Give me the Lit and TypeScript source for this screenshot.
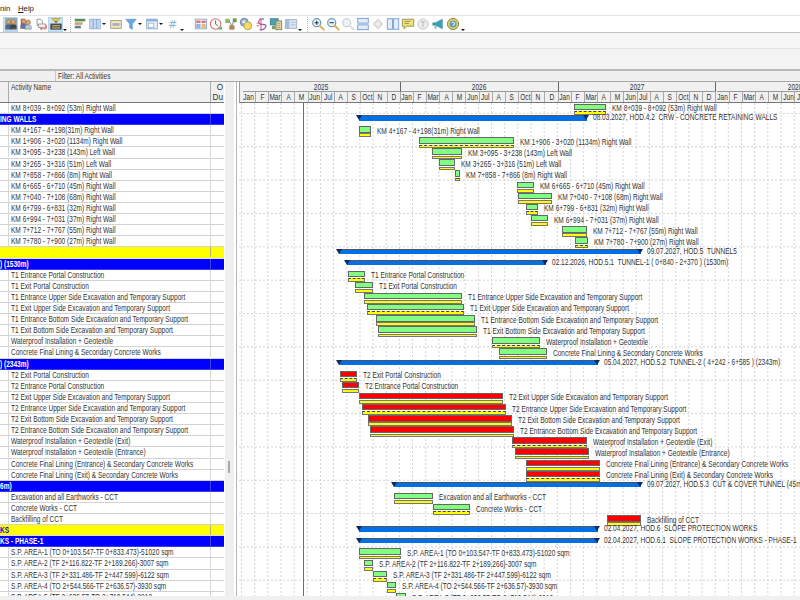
import { LitElement, html, css, svg, nothing } from "lit";
import { customElement } from "lit/decorators.js";

const ROW = 11.116;
const PANE_X = 239;
const FIRST_ROW_CENTER = 5.0;

type Row = {
  name?: string;
  kind?: "blue" | "yellow";
  bar?: [number, number];
  red?: boolean;
  sum?: [number, number];
  label?: string;
};

const rows: Row[] = [
  { name: "KM 8+039 - 8+092 (53m) Right Wall", bar: [574.3, 605.7] },
  { name: "ING WALLS", kind: "blue", sum: [357.3, 589.3], label: "08.03.2027, HOD.4.2  CRW - CONCRETE RETAINING WALLS" },
  { name: "KM 4+167 - 4+198(31m) Right Wall", bar: [359.3, 370.7] },
  { name: "KM 1+906 - 3+020 (1134m) Right Wall", bar: [419, 513.7] },
  { name: "KM 3+095 - 3+238 (143m) Left Wall", bar: [432, 462.3] },
  { name: "KM 3+265 - 3+316 (51m) Left Wall", bar: [439.3, 454.7] },
  { name: "KM 7+858 - 7+866 (8m) Right Wall", bar: [455.3, 459.7] },
  { name: "KM 6+665 - 6+710 (45m) Right Wall", bar: [517.3, 534.3] },
  { name: "KM 7+040 - 7+108 (68m) Right Wall", bar: [518, 552] },
  { name: "KM 6+799 - 6+831 (32m) Right Wall", bar: [526.3, 537.7] },
  { name: "KM 6+994 - 7+031 (37m) Right Wall", bar: [531, 547.7] },
  { name: "KM 7+712 - 7+767 (55m) Right Wall", bar: [562.3, 586.7] },
  { name: "KM 7+780 - 7+900 (27m) Right Wall", bar: [574.7, 587.7] },
  { name: "", kind: "yellow", sum: [337.3, 643], label: "09.07.2027, HOD.5  TUNNEL5" },
  { name: ") (1530m)", kind: "blue", sum: [345.3, 548.3], label: "02.12.2026, HOD.5.1  TUNNEL-1 ( 0+840 - 2+370 ) (1530m)" },
  { name: "T1 Entrance Portal Construction", bar: [347.7, 365] },
  { name: "T1 Exit Portal Construction", bar: [355.3, 372.7] },
  { name: "T1 Entrance Upper Side Excavation and Temporary Support", bar: [364.3, 461.7] },
  { name: "T1 Exit Upper Side Excavation and Temporary Support", bar: [366.7, 463.7] },
  { name: "T1 Entrance Bottom Side Excavation and Temporary Support", bar: [375.7, 474.7] },
  { name: "T1 Exit Bottom Side Excavation and Temporary Support", bar: [378.3, 476.7] },
  { name: "Waterproof Installation + Geotextile", bar: [492, 539.7] },
  { name: "Concrete Final Lining & Secondary Concrete Works", bar: [498.7, 546.7] },
  { name: ") (2343m)", kind: "blue", sum: [337.3, 600], label: "05.04.2027, HOD.5.2  TUNNEL-2 ( 4+242 - 6+585 ) (2343m)" },
  { name: "T2 Exit Portal Construction", bar: [340, 356.7], red: true },
  { name: "T2 Entrance Portal Construction", bar: [342.3, 359.3], red: true },
  { name: "T2 Exit Upper Side Excavation and Temporary Support", bar: [359.3, 503.3], red: true },
  { name: "T2 Entrance Upper Side Excavation and Temporary Support", bar: [361.7, 505.7], red: true },
  { name: "T2 Exit Bottom Side Excavation and Temporary Support", bar: [368, 512], red: true },
  { name: "T2 Entrance Bottom Side Excavation and Temporary Support", bar: [370.3, 514.3], red: true },
  { name: "Waterproof Installation + Geotextile (Exit)", bar: [512.3, 586.7], red: true },
  { name: "Waterproof Installation + Geotextile (Entrance)", bar: [515, 589], red: true },
  { name: "Concrete Final Lining (Entrance) & Secondary Concrete Works", bar: [526, 600.3], red: true },
  { name: "Concrete Final Lining (Exit) & Secondary Concrete Works", bar: [526, 600.3], red: true },
  { name: "6m)", kind: "blue", sum: [392.3, 642.7], label: "09.07.2027, HOD.5.3  CUT & COVER TUNNEL (45m)" },
  { name: "Excavation and all Earthworks - CCT", bar: [394.3, 432.7] },
  { name: "Concrete Works - CCT", bar: [433.3, 469.7] },
  { name: "Backfilling of CCT", bar: [606.7, 641], red: true },
  { name: "KS", kind: "yellow", sum: [357.3, 600], label: "02.04.2027, HOD.6  SLOPE PROTECTION WORKS" },
  { name: "KS - PHASE-1", kind: "blue", sum: [357.3, 600], label: "02.04.2027, HOD.6.1  SLOPE PROTECTION WORKS - PHASE-1" },
  { name: "S.P. AREA-1 (TO 0+103.547-TF 0+833.473)-51020 sqm", bar: [359.3, 400.7] },
  { name: "S.P. AREA-2 (TF 2+116.822-TF 2+189.266)-3007 sqm", bar: [364, 373] },
  { name: "S.P. AREA-3 (TF 2+331.486-TF 2+447.599)-6122 sqm", bar: [372.7, 387] },
  { name: "S.P. AREA-4 (TO 2+544.566-TF 2+636.57)-3930 sqm", bar: [387, 395.7] },
  { name: "S.P. AREA-5 (TF 2+636.57-TO 2+710.544)-2212", bar: [395.7, 406.3] },
];

const MONTHS = ["Jan", "F", "Mar", "A", "M", "Jun", "Jul", "A", "S", "Oct", "N", "D"];
const YEAR_W = 157.9;
const START_X = 242.8;

const ic = (body: unknown) => html`<svg class="ico" viewBox="0 0 16 16" width="16" height="16">${body}</svg>`;

const person = (x: number, y: number, shirt: string) => svg`
  <circle cx=${x} cy=${y} r="2.6" fill="#d8a878" stroke="#6b4a2a" stroke-width=".5"/>
  <path d="M${x - 3.6} ${y + 8}v-3q0-2 2-2h3.2q2 0 2 2v3z" fill=${shirt} stroke="#555" stroke-width=".4"/>`;

const mag = (sign: string, col: string, handle: string) => svg`
  <circle cx="6.5" cy="6.5" r="4.6" fill="#e8f4fb" stroke=${col} stroke-width="1.4"/>
  <path d="M10 10l4.5 4.5" stroke=${handle} stroke-width="2.2" stroke-linecap="round"/>
  ${sign === "+" ? svg`<path d="M4.2 6.5h4.6M6.5 4.2v4.6" stroke="#234" stroke-width="1.2"/>` : nothing}
  ${sign === "-" ? svg`<path d="M4.2 6.5h4.6" stroke="#234" stroke-width="1.2"/>` : nothing}`;

type Tool = { i?: unknown; on?: boolean; arrow?: "low" | "high"; sep?: number; gap?: number };

const tools: Tool[] = [
  { on: true, i: ic(svg`<rect x="2" y="1.5" width="12" height="13" fill="#a8bcae" stroke="#7a98b0"/>${person(5.5, 5.5, "#4a6a90")}${person(10.5, 5.5, "#444")}`) },
  { i: ic(svg`<rect x="2" y="2" width="5" height="11" fill="#c8606a"/>${person(5.5, 5, "#5a7ab0")}${person(10.5, 6, "#b8c6d8")}`) },
  { i: ic(svg`<path d="M3.5 2.5h4l2 2v5h-6z" fill="#fff" stroke="#888"/><rect x="5" y="8" width="8" height="4" fill="#f2f2f2" stroke="#999"/><path d="M14 9v4.5H7.5M9 12l-1.8 1.5L9 15" fill="none" stroke="#d55" stroke-width="1"/>`) },
  { on: true, arrow: "low", i: ic(svg`<path d="M3 1.5h10L10 5H6z" fill="#e8c83a" stroke="#776" stroke-width=".5"/><path d="M6.5 5h3l-1.5 2z" fill="#443"/><rect x="1.5" y="7.5" width="13" height="7" fill="#4a4a44"/><path d="M3.5 10h9M3.5 12.5h9" stroke="#e8d890"/>`) },
  { sep: 3 },
  { i: ic(svg`<rect x="2" y="2" width="12" height="3" fill="#5a8a60"/><rect x="2" y="6" width="9" height="3" fill="#c8a868"/><rect x="2" y="10" width="7" height="3" fill="#6a7a90"/>`) },
  { arrow: "high", i: ic(svg`<rect x="2" y="2.5" width="12" height="11" fill="#c4d8ef" stroke="#8fb0d8"/><path d="M6 2.5v11M10 2.5v11" stroke="#7ea2cf"/>`) },
  { i: ic(svg`<rect x="2" y="4" width="12" height="9" fill="#f2e4b8" stroke="#a89a7a"/><rect x="4" y="7" width="8" height="3" fill="#9ab0cc"/>`) },
  { arrow: "high", i: ic(svg`<path d="M2 2.5h12l-4.5 5.5v6l-3-1.5V8z" fill="#68aae0" stroke="#4a88c0" stroke-width=".6"/>`) },
  { arrow: "high", i: ic(svg`<rect x="2" y="2.5" width="12" height="11" fill="#eaf2fa" stroke="#7fa4d0"/><rect x="2" y="2.5" width="12" height="2.5" fill="#8ab0dc"/><rect x="4" y="7" width="6" height="5" fill="#fff" stroke="#9ab8d8"/>`) },
  { arrow: "low", i: html`<span class="hash">#</span>` },
  { gap: 7 },
  { i: ic(svg`<rect x="1.5" y="2.5" width="13" height="11" fill="#fff" stroke="#8aa0c0"/><rect x="2.5" y="4" width="5" height="3" fill="#d87a7a"/><rect x="8.5" y="4" width="5" height="3" fill="#d87a7a"/><rect x="2.5" y="8" width="5" height="4.5" fill="#9ab4d8"/><rect x="8.5" y="8" width="5" height="4.5" fill="#e8b880"/>`) },
  { i: ic(svg`<circle cx="7.5" cy="8" r="6" fill="#f4fbf4" stroke="#d87070" stroke-width="1.2"/><path d="M7.5 4v4.2l2.6 1.6" fill="none" stroke="#556"/><rect x="11" y="11" width="4" height="3.5" fill="#7aba7a"/>`) },
  { i: ic(svg`<rect x="1.5" y="2" width="5" height="5" fill="#8abc6a"/><rect x="10" y="1.5" width="4.5" height="4.5" fill="#6aa058"/><rect x="6" y="9.5" width="6" height="5" fill="#b08a5c"/><path d="M6 5l3 5M11 5L9 10" stroke="#777"/>`) },
  { i: ic(svg`<circle cx="6" cy="6" r="4.5" fill="#8ab4dc" stroke="#778"/><circle cx="10" cy="10" r="4.5" fill="#f2dc70" stroke="#b09a40"/><rect x="4" y="4" width="3" height="3" fill="#e8f0f8"/>`) },
  { i: ic(svg`<path d="M11.5 2.5Q6 1.5 5.5 5t4.5 3.5 3 3.5-6.5 2.5" fill="none" stroke="#8a5ab4" stroke-width="1.4"/><path d="M8 1v14" stroke="#d8505e" stroke-width="1.1"/><path d="M3 7h3M3 10h3" stroke="#d8505e"/>`) },
  { i: ic(svg`<rect x="1.5" y="2" width="9" height="7" fill="#4aa4b8" stroke="#3a7a90"/><rect x="8" y="4.5" width="6.5" height="10" fill="#ece498" stroke="#7a7a5a"/><rect x="3.5" y="10" width="4" height="4" fill="#7a9a70"/><path d="M9.5 7h3.5M9.5 9.5h3.5M9.5 12h3.5" stroke="#889"/>`) },
  { arrow: "low", i: ic(svg`<rect x="1.5" y="3" width="13" height="10" fill="#dbe6f2" stroke="#9ab0c6"/><rect x="1.5" y="3" width="4.5" height="10" fill="#a8bcd0"/><path d="M7.5 6h5.5M7.5 9h5.5" stroke="#abc"/>`) },
  { sep: 6.8 },
  { i: ic(mag("+", "#6a9ac0", "#dcb050")) },
  { i: ic(mag("-", "#6a9ac0", "#dcb050")) },
  { i: ic(mag("", "#cfcfcf", "#dedede")) },
  { i: ic(svg`<rect x="2" y="1.5" width="12" height="5.5" fill="#e4eefa" stroke="#6a96d6"/><rect x="2" y="9" width="12" height="5.5" fill="#e4eefa" stroke="#6a96d6"/>`) },
  { i: ic(svg`<path d="M8 2.5L13.5 8 8 13.5 2.5 8z" fill="#e4e4e4" stroke="#cacaca"/><rect x="6.5" y="6.5" width="3" height="3" fill="#f4f4f4"/>`) },
  { i: ic(svg`<rect x="1.5" y="2" width="5.8" height="12" fill="#e4eefa" stroke="#6a96d6"/><rect x="8.7" y="2" width="5.8" height="12" fill="#e4eefa" stroke="#6a96d6"/>`) },
  { i: ic(svg`<path d="M1.5 2.5h13v8h-8l-3 3v-3h-2z" fill="#f2e27a" stroke="#8a8a50"/><path d="M4 5h7M4 7.5h5" stroke="#8a8a50"/>`) },
  { i: ic(svg`<circle cx="8" cy="8" r="6" fill="#ececec" stroke="#c8c8c8"/><path d="M5.5 5.5h5M8 5.5v6" stroke="#bbb" stroke-width="1.2"/>`) },
  { i: ic(svg`<path d="M2 6.5h3L13 2.5v11L5 9.5H2z" fill="#3f9db0" stroke="#2f7f90" stroke-width=".5"/><rect x="4" y="10" width="2.5" height="3.5" fill="#9ac0ca"/>`) },
  { arrow: "low", i: ic(svg`<circle cx="8" cy="8" r="6.4" fill="#e8d448" stroke="#7a7a50"/><circle cx="8" cy="8" r="4" fill="#5a9ccf"/><path d="M6.4 6.6q1.6-1.8 3.2 0T8 9.4v1" fill="none" stroke="#fff" stroke-width="1.1"/>`) },
];

@customElement("app-root")
export class AppRoot extends LitElement {
  static styles = css`
    :host {
      display: block;
      width: 800px;
      height: 600px;
      overflow: hidden;
      background: #fff;
      font-family: "Liberation Sans", Arial, sans-serif;
      font-size: 8.2px;
      color: #333;
      position: relative;
    }
    .t {
      display: inline-block;
      white-space: pre;
      transform: scaleX(0.8);
      transform-origin: 0 50%;
    }
    .menu {
      height: 16px;
      display: flex;
      align-items: center;
      gap: 7.5px;
      font-size: 7.8px;
      color: #222;
      border-bottom: 1px solid #e2e2e2;
      box-sizing: border-box;
      padding-top: 1px;
    }
    .menu u { text-decoration: underline; }
    .toolbar {
      height: 17px;
      display: flex;
      align-items: center;
      padding-left: 3.2px;
      box-sizing: border-box;
      border-bottom: 1.5px solid #c2c2c2;
      position: relative;
    }
    .tool {
      width: 15px;
      height: 15px;
      flex: none;
      display: flex;
      align-items: center;
      justify-content: center;
    }
    .tool.on {
      background: #cfe4f7;
      outline: 1px solid #b4d4f0;
      outline-offset: -1px;
    }
    .ico { width: 14px; height: 14px; display: block; }
    .hash { color: #8fb0dc; font-size: 11px; font-family: "DejaVu Sans", sans-serif; }
    .arrow { width: 6px; height: 15px; flex: none; position: relative; }
    .arrow::after {
      content: "";
      position: absolute;
      left: 0;
      border: 2.2px solid transparent;
      border-top: 2.6px solid #111;
      border-bottom: 0;
    }
    .arrow.low::after { top: 12px; }
    .arrow.high::after { top: 6px; }
    .sep { flex: none; display: flex; justify-content: center; height: 15px; }
    .sep i { display: block; border-left: 1px dotted #b8b8b8; }
    .band1 { height: 16px; background: #f6f6f6; border-bottom: 1px solid #e2e2e2; box-sizing: border-box; }
    .band2 { height: 22px; background: #f3f3f3; border-bottom: 2px solid #b8b8b8; box-sizing: border-box; }
    .filter {
      height: 11px;
      display: flex;
      background: #f0f0f0;
      border-bottom: 1px solid #a8a8a8;
      box-sizing: border-box;
      line-height: 11.5px;
      color: #333;
    }
    .filter .blank { width: 56px; border-right: 1px solid #c8c8c8; box-sizing: border-box; }
    .filter .txt { padding-left: 2px; }
    .main { display: flex; height: 518px; position: relative; }
    .left { width: 224px; flex: none; display: flex; flex-direction: column; overflow: hidden; }
    .thead {
      height: 21px;
      flex: none;
      display: grid;
      grid-template-columns: 9px 202px 13px;
      background: #f0f0f0;
      border-bottom: 1px solid #777;
      box-sizing: border-box;
    }
    .thead > div { border-right: 1px solid #aaa; box-sizing: border-box; line-height: 9.5px; padding-top: 1px; }
    .thead .an { padding-left: 2px; }
    .thead .du { text-align: right; border-right: 0; color: #333; padding-right: 1px; padding-top: 1px; }
    .rows { overflow: hidden; height: 493px; }
    .row {
      height: ${ROW}px;
      display: grid;
      grid-template-columns: 9px 202px 13px;
      box-sizing: border-box;
      border-bottom: 1px solid #d2d2d2;
      line-height: 12px;
      white-space: nowrap;
    }
    .row > div { border-right: 1px solid #d8d8d8; box-sizing: border-box; overflow: visible; min-width: 0; height: 10px; }
    .row > div:last-child { border-right: 0; }
    .row .nm { padding-left: 2px; }
    .row.blue { background: #0000ff; color: #fff; font-weight: bold; border-bottom-color: #3a3af0; }
    .row.blue > div, .row.yellow > div { border-right-color: rgba(120,120,200,.55); }
    .row.yellow { background: #ffff00; color: #0000e0; font-weight: bold; border-bottom-color: #ddd; }
    .row.band .nm { padding-left: 0; margin-left: -9px; }
    .row.band .c0 { border-right-color: transparent; }
    .split {
      width: 15px;
      flex: none;
      position: relative;
      background: linear-gradient(to right, #fff 0 1px, #efefef 1px 10px, #fff 10px 12px, #b4b4b4 12px 13px, #fff 13px);
    }
    .thumb { position: absolute; left: 4px; top: 379px; width: 2px; height: 12px; background: #a8a8a8; }
    .gantt { flex: 1; position: relative; overflow: hidden; }
    .ghead {
      height: 21px;
      position: relative;
      background: #f0f0f0;
      border-bottom: 1px solid #777;
      box-sizing: border-box;
      border-left: 1px solid #999;
    }
    .cell {
      position: absolute;
      box-sizing: border-box;
      display: flex;
      justify-content: center;
      line-height: 11px;
      color: #333;
    }
    .cell .t { flex: none; transform-origin: 50% 50%; }
    .cell.year { top: 0; height: 10px; border-right: 1px solid #666; border-bottom: 1px solid #999; }
    .cell.month { top: 10px; height: 10px; border-right: 1px solid #aaa; }
    .canvas { position: absolute; left: 0; top: 21px; right: 0; bottom: 0; }
    .grid { position: absolute; left: 0; top: 0; width: 561px; height: 500px; }
    .bar { position: absolute; box-sizing: border-box; height: 6.5px; border: 1px solid #666; }
    .bar.g { background: #80ff80; }
    .bar.r { background: #ff0000; }
    .yel { position: absolute; box-sizing: border-box; height: 3.6px; background: #ffff00; border: 1px solid #777; }
    .yel.dot { border-top: 1px dashed #444; }
    .sum { position: absolute; box-sizing: border-box; height: 5.5px; background: #0070e8; border-top: 1px solid #555; }
    .tri {
      position: absolute;
      width: 0;
      height: 0;
      border-left: 3.5px solid transparent;
      border-right: 3.5px solid transparent;
      border-top: 5px solid #0a2a66;
    }
    .lbl { position: absolute; line-height: 11px; height: 11px; color: #333; white-space: pre; transform: scaleX(0.8); transform-origin: 0 50%; }
    .today { position: absolute; top: 0; bottom: 0; width: 1px; background: #6a5ae0; }
    .hbar { position: absolute; left: 0; right: 0; bottom: 0; height: 4px; background: #f0f0f0; z-index: 3; }
  `;

  private renderTool(t: Tool) {
    if (t.sep) return html`<div class="sep" style="width:${t.sep}px"><i></i></div>`;
    if (t.gap) return html`<div style="width:${t.gap}px;flex:none"></div>`;
    return html`<div class="tool ${t.on ? "on" : ""}">${t.i}</div>${t.arrow ? html`<div class="arrow ${t.arrow}"></div>` : nothing}`;
  }

  private renderGrid() {
    const v: number[] = [];
    for (let k = 0; k < 43; k++) v.push(241.5 - PANE_X + (YEAR_W / 12) * k);
    const h: number[] = [];
    for (let k = 0; k < 15; k++) h.push(10.4 + 33.35 * k);
    return html`<svg class="grid" width="561" height="500">
      ${v.map((x) => svg`<line x1=${x} x2=${x} y1="0" y2="500" stroke="#d4d4d4" stroke-dasharray="2 2"/>`)}
      ${h.map((y) => svg`<line x1="0" x2="561" y1=${y} y2=${y} stroke="#d4d4d4" stroke-dasharray="2 2"/>`)}
    </svg>`;
  }

  private renderHead() {
    const cells = [];
    for (let y = 0; y < 4; y++) {
      const yx = START_X - PANE_X - 1 + y * YEAR_W;
      cells.push(html`<div class="cell year" style="left:${yx}px;width:${YEAR_W}px"><span class="t">${2025 + y}</span></div>`);
      MONTHS.forEach((m, i) => {
        cells.push(html`<div class="cell month" style="left:${yx + (i * YEAR_W) / 12}px;width:${YEAR_W / 12}px"><span class="t">${m}</span></div>`);
      });
    }
    return cells;
  }

  private renderBars() {
    return rows.map((r, i) => {
      const c = FIRST_ROW_CENTER + ROW * i;
      const out = [];
      if (r.bar) {
        const [a, b] = r.bar;
        const l = a - PANE_X;
        const w = b - a;
        out.push(html`<div class="bar ${r.red ? "r" : "g"}" style="left:${l}px;top:${c - 4.2}px;width:${w}px"></div>`);
        out.push(html`<div class="yel ${i % 3 === 0 ? "dot" : ""}" style="left:${l}px;top:${c + 3.2}px;width:${w}px"></div>`);
        out.push(html`<div class="lbl" style="left:${b - PANE_X + 6}px;top:${c - 4.6}px">${r.name}</div>`);
      }
      if (r.sum) {
        const [a, b] = r.sum;
        out.push(html`<div class="sum" style="left:${a - PANE_X + 2}px;top:${c - 4}px;width:${b - a - 4}px"></div>`);
        out.push(html`<div class="tri" style="left:${a - PANE_X - 1}px;top:${c - 4}px"></div>`);
        out.push(html`<div class="tri" style="left:${b - PANE_X - 6}px;top:${c - 4}px"></div>`);
        out.push(html`<div class="lbl" style="left:${b - PANE_X + 4}px;top:${c - 7}px">${r.label}</div>`);
      }
      return out;
    });
  }

  render() {
    return html`
      <div class="menu"><span>nin</span><span><u>H</u>elp</span></div>
      <div class="toolbar">${tools.map((t) => this.renderTool(t))}</div>
      <div class="band1"></div>
      <div class="band2"></div>
      <div class="filter"><div class="blank"></div><div class="txt"><span class="t">Filter: All Activities</span></div></div>
      <div class="main">
        <div class="left">
          <div class="thead">
            <div></div>
            <div class="an"><span class="t">Activity Name</span></div>
            <div class="du">O<br />Du</div>
          </div>
          <div class="rows">
            ${rows.map(
              (r) => html`<div class="row ${r.kind ?? ""} ${r.kind ? "band" : ""}">
                <div class="c0"></div>
                <div class="nm"><span class="t">${r.name}</span></div>
                <div></div>
              </div>`
            )}
          </div>
        </div>
        <div class="split"><div class="thumb"></div></div>
        <div class="gantt">
          <div class="ghead">${this.renderHead()}</div>
          <div class="canvas">
            ${this.renderGrid()}
            ${this.renderBars()}
            <div class="today" style="left:${303.3 - PANE_X}px"></div>
          </div>
        </div>
        <div class="hbar"></div>
      </div>
    `;
  }
}
